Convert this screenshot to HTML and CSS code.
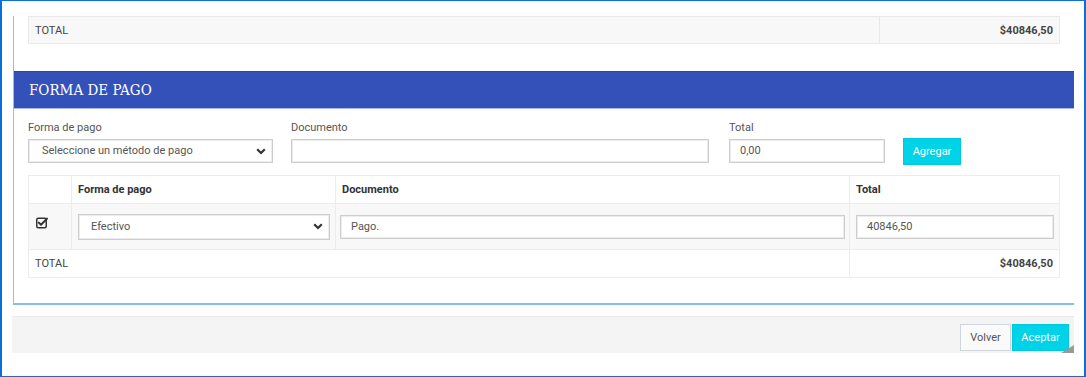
FILE: index.html
```html
<!DOCTYPE html>
<html lang="es">
<head>
<meta charset="utf-8">
<title>Forma de pago</title>
<link rel="stylesheet" href="styles.css">
</head>
<body>
<div class="frame">
  <div class="panel">
    <table class="grid summary">
      <tr>
        <td class="lbl">TOTAL</td>
        <td class="amt">$40846,50</td>
      </tr>
    </table>

    <div class="section-head">FORMA DE PAGO</div>

    <div class="form-row">
      <div class="field f-method">
        <label>Forma de pago</label>
        <div class="select">Seleccione un método de pago</div>
      </div>
      <div class="field f-doc">
        <label>Documento</label>
        <div class="input"></div>
      </div>
      <div class="field f-total">
        <label>Total</label>
        <div class="input">0,00</div>
      </div>
      <button class="btn btn-cyan btn-add">Agregar</button>
    </div>

    <table class="grid payments">
      <colgroup>
        <col class="c1"><col class="c2"><col class="c3"><col class="c4">
      </colgroup>
      <tr class="head">
        <th></th>
        <th>Forma de pago</th>
        <th>Documento</th>
        <th>Total</th>
      </tr>
      <tr class="body">
        <td class="chk">
          <svg width="12" height="12" viewBox="0 0 12 12" aria-hidden="true">
            <rect x="0.75" y="1.25" width="9.5" height="9.5" rx="1.5" fill="none" stroke="#333" stroke-width="1.5"/>
            <path d="M2.8 5.6 L5 7.8 L11 1.6" fill="none" stroke="#333" stroke-width="2" stroke-linecap="round" stroke-linejoin="round"/>
          </svg>
        </td>
        <td class="cell-sel"><div class="select">Efectivo</div></td>
        <td class="cell-doc"><div class="input">Pago.</div></td>
        <td class="cell-tot"><div class="input">40846,50</div></td>
      </tr>
      <tr class="foot">
        <td colspan="3" class="lbl">TOTAL</td>
        <td class="amt">$40846,50</td>
      </tr>
    </table>
  </div>

  <div class="footer">
    <button class="btn btn-light">Volver</button>
    <button class="btn btn-cyan">Aceptar</button>
    <span class="grip"></span>
  </div>
</div>
</body>
</html>
```

FILE: styles.css
```css
* { box-sizing: border-box; }

html, body {
  margin: 0;
  padding: 0;
  background: #ffffff;
}

body {
  font-family: Roboto, "Liberation Sans", sans-serif;
  font-size: 11px;
  color: #555;
}

.frame {
  width: 1086px;
  height: 377px;
  border-style: solid;
  border-color: #0a6fd8;
  border-width: 1px 2px 1px 2px;
  padding: 15px 10px 0 10px;
  overflow: hidden;
}

.panel {
  margin-left: 1px;
  border-left: 1px solid #8cc2e6;
  border-bottom: 2px solid #86bfe5;
  padding-bottom: 25px;
}

/* tables */
.grid {
  border-collapse: collapse;
  width: calc(100% - 28px);
  margin: 0 14px;
}

.grid td, .grid th {
  border: 1px solid #ececec;
  text-align: left;
  padding: 0 6px;
}

.summary {
  background: #f8f8f8;
}

.summary td {
  height: 27px;
  border-color: #e9e9e9;
}

.summary .lbl { color: #444; }

.summary .amt {
  width: 180px;
  text-align: right;
  font-weight: bold;
  color: #444;
  padding-right: 6px;
}

/* section header */
.section-head {
  margin-top: 27px;
  height: 38px;
  background: #3451b9;
  border-top: 1px solid #2a44a8;
  border-bottom: 1px solid #a9b7e2;
  color: #fff;
  font-family: "DejaVu Serif", "Liberation Serif", serif;
  font-stretch: condensed;
  font-size: 15px;
  line-height: 36px;
  padding-left: 15px;
}

/* form */
.form-row {
  display: flex;
  align-items: flex-end;
  padding: 11px 14px 0 14px;
}

.field {
  display: flex;
  flex-direction: column;
}

.field label {
  line-height: 16px;
  margin-bottom: 3px;
  color: #555;
}

.f-method { width: 245px; }
.f-doc { width: 418px; margin-left: 18px; }
.f-total { width: 156px; margin-left: 20px; }

.input, .select {
  height: 24px;
  border: 1px solid #cdcdcd;
  box-shadow: inset 0 0 0 1px #ececec;
  background: #fff;
  line-height: 22px;
  padding: 0 10px;
  color: #555;
}

.select {
  position: relative;
  padding-left: 13px;
}

.select::after {
  content: "";
  position: absolute;
  right: 6px;
  top: 8px;
  width: 10px;
  height: 7px;
  background: url("data:image/svg+xml;utf8,<svg xmlns='http://www.w3.org/2000/svg' width='10' height='7' viewBox='0 0 10 7'><path d='M1.2 1.2 L5 5 L8.8 1.2' fill='none' stroke='%23333' stroke-width='2.2'/></svg>") no-repeat;
}

.btn {
  font-family: Roboto, "Liberation Sans", sans-serif;
  font-size: 11px;
  border: 1px solid transparent;
  cursor: pointer;
  padding: 0;
}

.btn-cyan {
  background: #00d3e8;
  border-color: #00c9de;
  color: #fff;
}

.btn-add {
  width: 58px;
  height: 27px;
  margin-left: 18px;
  margin-bottom: -2px;
}

/* payments table */
.payments {
  margin-top: 12px;
}

.payments .c1 { width: 43px; }
.payments .c2 { width: 264px; }
.payments .c3 { width: 514px; }

.payments th {
  height: 28px;
  font-weight: bold;
  color: #333;
  padding-left: 6px;
}

.payments .body td {
  background: #f8f8f8;
  height: 46px;
  padding: 9px 6px 9px 6px;
}

.payments .body td.chk {
  vertical-align: top;
  padding: 13px 0 0 7px;
}

.payments .body td.chk svg { display: block; }

.payments .body .select { height: 26px; line-height: 24px; }
.payments .body .cell-sel { padding-left: 6px; padding-right: 5px; }
.payments .body .cell-sel .select { padding-left: 12px; }
.payments .body .cell-doc { padding-left: 4px; padding-right: 4px; }
.payments .body .cell-tot { padding-left: 6px; padding-right: 5px; }

.payments .foot td {
  height: 28px;
}

.payments .foot .lbl { color: #444; }

.payments .foot .amt {
  text-align: right;
  font-weight: bold;
  color: #444;
  padding-right: 6px;
}

/* footer */
.footer {
  position: relative;
  margin-top: 11px;
  height: 37px;
  background: #f4f4f4;
  border-top: 1px solid #e9e9ec;
  display: flex;
  justify-content: flex-end;
  align-items: flex-start;
  padding: 7px 5px 0 0;
}

.footer .btn {
  height: 27px;
}

.btn-light {
  width: 51px;
  background: #fafafa;
  border-color: #cfd5dc;
  color: #555;
  margin-right: 1px;
}

.footer .btn-cyan {
  width: 57px;
}

.grip {
  position: absolute;
  right: 0;
  bottom: 0;
  width: 0;
  height: 0;
  border-style: solid;
  border-width: 0 0 8px 13px;
  border-color: transparent transparent #999 transparent;
}
```
